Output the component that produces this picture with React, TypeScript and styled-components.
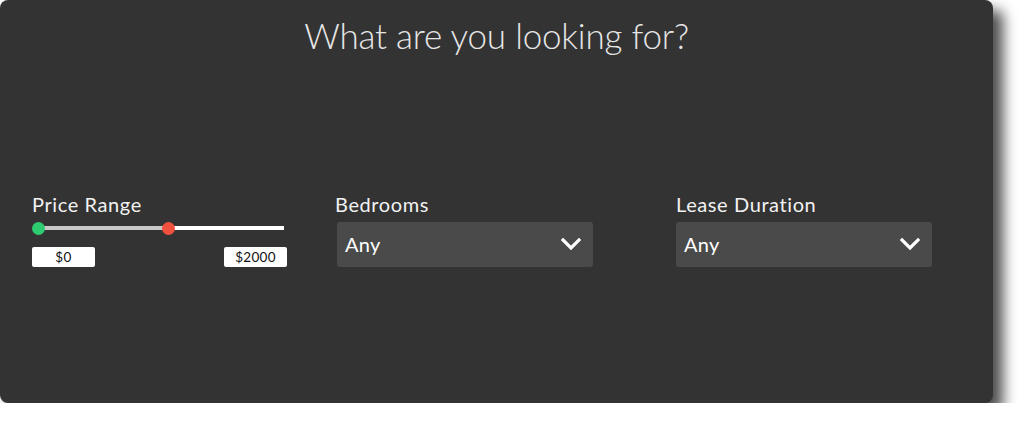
import React from "react";
import styled, { createGlobalStyle } from "styled-components";

const Global = createGlobalStyle`
  html, body { margin: 0; padding: 0; background: #fff; }
  body { font-family: "Lato", "Open Sans", sans-serif; }
`;

const Panel = styled.div`
  box-sizing: border-box;
  width: 993px;
  height: 403px;
  background: #333333;
  border-radius: 8px;
  box-shadow: 10px 10px 14px rgba(0, 0, 0, 0.7);
  padding-top: 13px;
  display: flex;
  flex-direction: column;
`;

const Title = styled.h1`
  margin: 0;
  text-align: center;
  font-family: "Lato", sans-serif;
  font-weight: 300;
  font-size: 35px;
  line-height: 44px;
  letter-spacing: -0.2px;
  color: #e6e6e6;
`;

const Row = styled.div`
  display: grid;
  grid-template-columns: 303px 341px 256px;
  padding-left: 32px;
  margin-top: 136px;
`;

const Field = styled.div`
  display: flex;
  flex-direction: column;
`;

const Label = styled.div`
  font-family: "Lato", sans-serif;
  font-size: 20px;
  line-height: 22px;
  color: #f2f2f2;
  letter-spacing: 0.6px;
`;

const Track = styled.div`
  position: relative;
  margin: 11px 0 0 6px;
  width: 246px;
  height: 4px;
  background: #ffffff;
`;

const Filled = styled.div`
  position: absolute;
  left: 0;
  top: 0;
  height: 4px;
  background: #c8c8c8;
`;

const Thumb = styled.div<{ $color: string }>`
  position: absolute;
  top: -4.5px;
  width: 13px;
  height: 13px;
  border-radius: 50%;
  margin-left: -6.5px;
  background: ${(p) => p.$color};
`;

const Values = styled.div`
  display: flex;
  justify-content: space-between;
  width: 255px;
  margin-top: 17px;
`;

const ValueBox = styled.div`
  box-sizing: border-box;
  width: 63px;
  height: 20px;
  background: #fff;
  border-radius: 2px;
  font-family: "Lato", sans-serif;
  font-size: 13.5px;
  line-height: 20px;
  letter-spacing: 0.3px;
  color: #111;
  text-align: center;
`;

const Select = styled.div<{ $shift: number }>`
  box-sizing: border-box;
  margin-top: 7px;
  margin-left: ${(p) => p.$shift}px;
  width: 256px;
  height: 45px;
  background: #4a4a4a;
  border-radius: 3px;
  display: flex;
  align-items: center;
  justify-content: space-between;
  padding: 0 12px 2px 8px;
  font-family: "Lato", sans-serif;
  font-size: 20px;
  letter-spacing: 0.3px;
  color: #fff;
`;

const Chevron = () => (
  <svg width="20" height="14" viewBox="0 0 20 14">
    <path d="M2 3 L10 11 L18 3" fill="none" stroke="#fff" strokeWidth="3.2" strokeLinecap="square" />
  </svg>
);

export default function App() {
  const lo = 0;
  const hi = 53;
  return (
    <>
      <Global />
      <Panel>
        <Title>What are you looking for?</Title>
        <Row>
          <Field>
            <Label>Price Range</Label>
            <Track>
              <Filled style={{ width: `${hi}%` }} />
              <Thumb $color="#2ecc71" style={{ left: `${lo}%` }} />
              <Thumb $color="#f0513f" style={{ left: `${hi}%` }} />
            </Track>
            <Values>
              <ValueBox>$0</ValueBox>
              <ValueBox>$2000</ValueBox>
            </Values>
          </Field>
          <Field>
            <Label>Bedrooms</Label>
            <Select $shift={2}>
              <span>Any</span>
              <Chevron />
            </Select>
          </Field>
          <Field>
            <Label>Lease Duration</Label>
            <Select $shift={0}>
              <span>Any</span>
              <Chevron />
            </Select>
          </Field>
        </Row>
      </Panel>
    </>
  );
}
